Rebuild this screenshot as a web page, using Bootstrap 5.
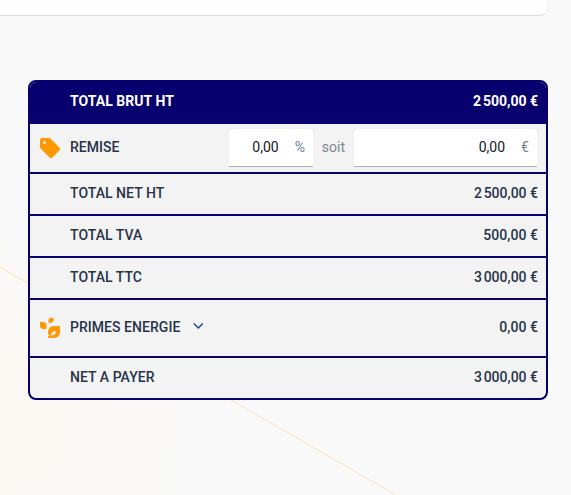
<!DOCTYPE html>
<html lang="fr">
<head>
    <meta charset="UTF-8">
    <title>Devis - Totaux</title>
    <link href="https://cdn.jsdelivr.net/npm/bootstrap@5.3.2/dist/css/bootstrap.min.css" rel="stylesheet">
    <script src="https://cdn.jsdelivr.net/npm/bootstrap@5.3.2/dist/js/bootstrap.bundle.min.js"></script>
    <style>
        body {
            height: 100vh;
            background: radial-gradient(circle at 0 420px, #fcf8f2 0, #f9f9f9 200px) #f9f9f9;
            color: #263349;
            font-family: Roboto, sans-serif;
            font-size: 14px;
            line-height: 20px;
        }
        .bg-line {
            z-index: -1;
        }
        .previous-panel {
            width: 548px;
            height: 16px;
            background: #fefefe;
            border-bottom: 1px solid #dcdcdc;
            border-right: 1px solid #eee;
            border-bottom-right-radius: 8px;
        }
        .totals {
            width: 520px;
            margin: 64px 0 0 28px;
            border: 2px solid #08006e;
            border-radius: 8px;
            background: #f3f3f3;
            font-weight: 500;
            letter-spacing: .04px;
        }
        .total-line {
            height: 42px;
            padding: 0 8px;
            border-bottom: 2px solid #08006e;
        }
        .total-line:last-child {
            height: 40px;
            border-bottom: 0;
        }
        .total-line > span {
            padding-bottom: 2px;
        }
        .total-head {
            background: #08006e;
            color: #fff;
            font-weight: 700;
        }
        .line-discount {
            height: 50px;
            padding-right: 9px;
        }
        .line-bonus {
            height: 58px;
        }
        .line-icon {
            width: 24px;
            height: 24px;
            margin-right: 8px;
            flex-shrink: 0;
            fill: #ff9800;
        }
        .amount-field {
            height: 38px;
            padding: 0 8px 1px;
            background: #fff;
            border-bottom: 1px solid #b4b4b4;
            border-radius: 4px 4px 0 0;
            box-shadow: 0 0 1px rgba(0, 0, 0, .15);
            font-weight: 400;
        }
        .amount-field input {
            min-width: 0;
            width: 100%;
            padding: 0;
            border: 0;
            outline: 0;
            background: transparent;
            color: #111827;
            text-align: right;
        }
        .field-percent {
            width: 84px;
        }
        .field-euro {
            width: 183px;
        }
        .unit {
            color: #6b8299;
            font-weight: 400;
        }
        .or-label {
            width: 41px;
            color: #7d8791;
            font-weight: 400;
        }
        .chevron {
            margin: 0 0 5px 8px;
        }
    </style>
</head>
<body class="overflow-hidden">

<svg class="bg-line position-absolute top-0 start-0" width="571" height="495">
    <path d="M0 267L396 495" stroke="#fbe6cc" stroke-width="1.200" fill="none"/>
</svg>

<div class="previous-panel"></div>

<div class="totals overflow-hidden">
    <div class="total-line total-head d-flex align-items-center">
        <span class="line-icon"></span>
        <span>TOTAL BRUT HT</span>
        <span class="ms-auto">2&#8239;500,00&nbsp;€</span>
    </div>
    <div class="total-line line-discount d-flex align-items-center">
        <svg class="line-icon" viewBox="0 0 24 24">
            <path d="M21.41 11.58l-9-9C12.05 2.22 11.55 2 11 2H4c-1.1 0-2 .9-2 2v7c0 .55.22 1.05.59 1.42l9 9c.36.36.86.58 1.41.58s1.05-.22 1.41-.59l7-7c.37-.36.59-.86.59-1.41s-.23-1.06-.59-1.42zM6.5 8a1.5 1.5 0 1 1 0-3 1.5 1.5 0 0 1 0 3z"/>
        </svg>
        <span>REMISE</span>
        <div class="amount-field field-percent d-flex align-items-center ms-auto">
            <input type="text" value="0,00">
            <span class="unit ms-3">%</span>
        </div>
        <span class="or-label text-center">soit</span>
        <div class="amount-field field-euro d-flex align-items-center">
            <input type="text" value="0,00">
            <span class="unit ms-3">€</span>
        </div>
    </div>
    <div class="total-line d-flex align-items-center">
        <span class="line-icon"></span>
        <span>TOTAL NET HT</span>
        <span class="ms-auto">2&#8239;500,00&nbsp;€</span>
    </div>
    <div class="total-line d-flex align-items-center">
        <span class="line-icon"></span>
        <span>TOTAL TVA</span>
        <span class="ms-auto">500,00&nbsp;€</span>
    </div>
    <div class="total-line d-flex align-items-center">
        <span class="line-icon"></span>
        <span>TOTAL TTC</span>
        <span class="ms-auto">3&#8239;000,00&nbsp;€</span>
    </div>
    <div class="total-line line-bonus d-flex align-items-center">
        <svg class="line-icon" viewBox="0 0 24 24">
            <path d="M2 6h3Q8.500 6 8.500 9.500V13H5.500Q2 13 2 9.500zM15.500 1.800V4Q15.500 6.800 12.700 6.800H10.500V4.600Q10.500 1.800 13.300 1.800z"/>
            <path d="M22 10v6.200a5.800 5.800 0 0 1-5.800 5.800H10v-1.500l1-1a5.800 5.800 0 0 1-1-3.300c0-3.600 2.600-6.200 6.200-6.200z"/>
            <path d="M11.800 20.300l1.600-1.400q-.600-3.600 4.400-4q0 4.600-4 4.300l-1.600 1.500z" fill="#f3f3f3"/>
        </svg>
        <span>PRIMES ENERGIE</span>
        <svg class="chevron" width="20" height="20" viewBox="0 0 20 20" fill="none" stroke="#104a8e" stroke-width="1.400">
            <path d="M5.800 7.500l4.500 4.500L14.800 7.500"/>
        </svg>
        <span class="ms-auto">0,00&nbsp;€</span>
    </div>
    <div class="total-line d-flex align-items-center">
        <span class="line-icon"></span>
        <span>NET A PAYER</span>
        <span class="ms-auto">3&#8239;000,00&nbsp;€</span>
    </div>
</div>

</body>
</html>
